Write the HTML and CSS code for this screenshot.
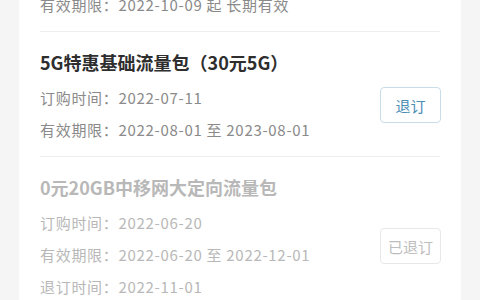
FILE: index.html
```html
<!DOCTYPE html>
<html lang="zh-CN">
<head>
<meta charset="utf-8">
<link rel="stylesheet" href="styles.css">
</head>
<body>
<div class="card">
  <div class="item first">
    <div class="line">有效期限：2022-10-09 起 长期有效</div>
  </div>
  <div class="item">
    <div class="title">5G特惠基础流量包（30元5G）</div>
    <div class="info-row">
      <div class="lines">
        <div class="line">订购时间：2022-07-11</div>
        <div class="line">有效期限：2022-08-01 至 2023-08-01</div>
      </div>
      <button class="btn">退订</button>
    </div>
  </div>
  <div class="item disabled">
    <div class="title">0元20GB中移网大定向流量包</div>
    <div class="info-row">
      <div class="lines">
        <div class="line">订购时间：2022-06-20</div>
        <div class="line">有效期限：2022-06-20 至 2022-12-01</div>
        <div class="line">退订时间：2022-11-01</div>
      </div>
      <button class="btn btn-done">已退订</button>
    </div>
  </div>
</div>
</body>
</html>
```

FILE: styles.css
```css
html, body {
  margin: 0;
  padding: 0;
  height: 100%;
  overflow: hidden;
}
body {
  background: #f5f5f5;
  padding: 0 19px;
  font-family: "Noto Sans CJK SC", "Noto Sans", sans-serif;
}
.card {
  background: #ffffff;
  padding: 0 21px;
  margin-top: -11px;
  min-height: 400px;
}
.item {
  border-top: 1px solid #eeeeee;
  padding: 18px 0 10px;
}
.item.first {
  border-top: none;
  padding-top: 0;
}
.title {
  font-size: 18px;
  font-weight: 700;
  line-height: 24px;
  color: #2e2e2e;
  margin-bottom: 8px;
}
.info-row {
  display: flex;
  align-items: center;
  justify-content: space-between;
}
.line {
  font-size: 15px;
  line-height: 32px;
  color: #8a8a8a;
  letter-spacing: 0.7px;
  white-space: nowrap;
}
.btn {
  width: 61px;
  height: 36px;
  border: 1px solid #c9dde8;
  border-radius: 4px;
  background: #ffffff;
  color: #4a8db5;
  font-family: "Noto Sans CJK SC", "Noto Sans", sans-serif;
  font-size: 15px;
  padding: 0;
  margin-bottom: 18px;
  margin-right: -1px;
}
.disabled .title {
  color: #b8b8b8;
}
.disabled .line {
  color: #b8b8b8;
}
.btn-done {
  border-color: #e8e8e8;
  color: #bdbdbd;
}
```
